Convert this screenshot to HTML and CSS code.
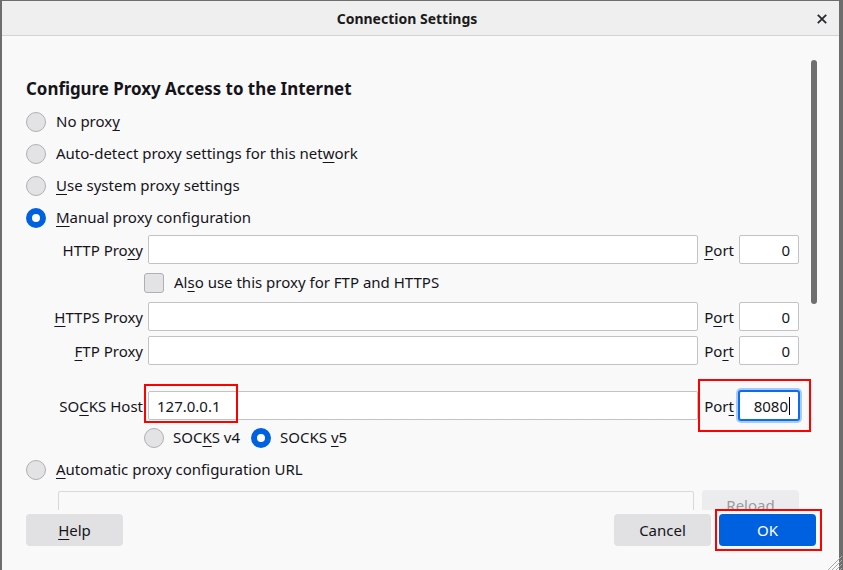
FILE: index.html
```html
<!DOCTYPE html>
<html>
<head>
<meta charset="utf-8">
<title>Connection Settings</title>
<link rel="stylesheet" href="styles.css">
</head>
<body>
<div class="window">
  <div class="titlebar">
    <div class="title">Connection Settings</div>
    <svg class="close" width="10" height="10" viewBox="0 0 10 10"><path d="M0.8 0.8L9.2 9.2M9.2 0.8L0.8 9.2" stroke="#2a2a2e" stroke-width="1.8" fill="none"/></svg>
  </div>
  <div class="content">
    <div class="scroll">
      <h1 class="heading">Configure Proxy Access to the Internet</h1>
      <div class="radio-row first"><span class="radio"></span><span class="rtext">No prox<u>y</u></span></div>
      <div class="radio-row"><span class="radio"></span><span class="rtext">Auto-detect proxy settings for this net<u>w</u>ork</span></div>
      <div class="radio-row"><span class="radio"></span><span class="rtext"><u>U</u>se system proxy settings</span></div>
      <div class="radio-row"><span class="radio checked"></span><span class="rtext"><u>M</u>anual proxy configuration</span></div>

      <div class="prow http">
        <span class="plabel">HTTP Pro<u>x</u>y</span>
        <span class="input"></span>
        <span class="port"><u>P</u>ort</span>
        <span class="input num">0</span>
      </div>
      <div class="check-row"><span class="checkbox"></span><span class="rtext">Al<u>s</u>o use this proxy for FTP and HTTPS</span></div>
      <div class="prow https">
        <span class="plabel"><u>H</u>TTPS Proxy</span>
        <span class="input"></span>
        <span class="port">P<u>o</u>rt</span>
        <span class="input num">0</span>
      </div>
      <div class="prow ftp">
        <span class="plabel"><u>F</u>TP Proxy</span>
        <span class="input"></span>
        <span class="port">Po<u>r</u>t</span>
        <span class="input num">0</span>
      </div>
      <div class="prow socks">
        <span class="plabel">SO<u>C</u>KS Host</span>
        <span class="input">127.0.0.1</span>
        <span class="port">Por<u>t</u></span>
        <span class="input num focus">8080<span class="caret"></span></span>
      </div>
      <div class="socks-type">
        <span class="radio"></span><span class="stext rtext">SOC<u>K</u>S v4</span>
        <span class="radio checked"></span><span class="stext rtext">SOCKS <u>v</u>5</span>
      </div>
      <div class="radio-row"><span class="radio"></span><span class="rtext"><u>A</u>utomatic proxy configuration URL</span></div>
      <div class="url-row">
        <span class="input url"></span>
        <span class="btn reload">R<u>e</u>load</span>
      </div>
    </div>
    <div class="scrollbar"></div>
  </div>
  <div class="footer">
    <span class="btn"><span><u>H</u>elp</span></span>
    <span class="spacer"></span>
    <span class="btn">Cancel</span>
    <span class="btn primary">OK</span>
  </div>
</div>
<div class="mark mark-host"></div>
<div class="mark mark-port"></div>
<div class="mark mark-ok"></div>
<svg class="grip" width="16" height="16" viewBox="0 0 16 16">
  <path d="M16 2L2 16M16 6L6 16M16 10L10 16M16 14L14 16" stroke="#a8a8a8" stroke-width="1" fill="none"/>
</svg>
</body>
</html>
```
FILE: styles.css
```css
* { box-sizing: border-box; }
html, body { margin: 0; padding: 0; }
body {
  width: 843px;
  height: 570px;
  overflow: hidden;
  position: relative;
  font-family: "Noto Sans", "Open Sans", sans-serif;
  font-size: 15px;
  color: #15141a;
  background: #6d6d6d;
}
u { text-decoration: underline; text-decoration-thickness: 1px; text-underline-offset: 3px; }

.window {
  height: 570px;
  border-style: solid;
  border-color: #6d6d6d;
  border-width: 1px 4px 0 2px;
  display: flex;
  flex-direction: column;
  background: #f9f9f9;
}
.titlebar {
  height: 35px;
  flex: none;
  background: #efefef;
  border-bottom: 1px solid #d3d3d3;
  display: flex;
  align-items: center;
  position: relative;
}
.title {
  flex: 1;
  text-align: center;
  font-weight: 700;
  font-size: 14px;
  padding-right: 27px;
  color: #1a1a1a;
}
.close { position: absolute; right: 12px; top: 13px; }

.content {
  flex: 1;
  position: relative;
  overflow: hidden;
}
.scroll { padding: 41px 40px 0 24px; }
.heading {
  margin: 0;
  font-size: 16.9px;
  line-height: 24px;
  font-weight: 700;
}
.radio-row {
  display: flex;
  align-items: center;
  height: 32px;
  gap: 10px;
}
.radio-row.first { margin-top: 5px; }
.rtext { padding-bottom: 2px; }
.radio {
  width: 20px;
  height: 20px;
  flex: none;
  border-radius: 50%;
  border: 1px solid #b0b0b4;
  background: #e3e3e5;
}
.radio.checked { border: 6px solid #0061e0; background: #fff; }

.prow {
  display: grid;
  grid-template-columns: 93px 1fr auto 60px;
  column-gap: 5px;
  align-items: center;
  margin-left: 24px;
  height: 29px;
}
.prow.http { margin-top: 1px; }
.prow.ftp { margin-top: 5px; }
.prow.socks { margin-top: 26px; }
.plabel { text-align: right; white-space: nowrap; }
.port { padding-left: 1px; }
.input {
  height: 29px;
  background: #fff;
  border: 1px solid #c3c3c6;
  border-radius: 2px;
  padding: 0 8px;
  display: flex;
  align-items: center;
}
.input.num { justify-content: flex-end; }
.input.focus {
  border-color: #0a6cf0;
  box-shadow: 0 0 0 1px #0a6cf0, 0 0 0 3px #a8cbf7;
}
.caret { display: inline-block; width: 1px; height: 18px; background: #000; margin-left: 1px; }

.check-row {
  display: flex;
  align-items: center;
  gap: 10px;
  height: 38px;
  margin-left: 118px;
}
.checkbox {
  width: 20px;
  height: 20px;
  flex: none;
  border: 1px solid #b0b0b4;
  background: #e3e3e5;
  border-radius: 3px;
}

.socks-type {
  display: flex;
  align-items: center;
  height: 32px;
  margin-top: 2px;
  margin-left: 118px;
}
.socks-type .stext { margin: 0 11px 0 9px; }

.url-row {
  display: flex;
  gap: 8px;
  margin-top: 5px;
  margin-left: 32px;
}
.input.url { flex: 1; height: 30px; background: transparent; border-color: #d8d8da; }
.btn {
  width: 97px;
  height: 32px;
  flex: none;
  border-radius: 4px;
  background: #e1e1e3;
  display: flex;
  align-items: center;
  justify-content: center;
}
.btn.reload { margin-top: -1px; background: #ececee; color: #9a9a9e; align-items: flex-start; padding-top: 5px; }
.btn.primary { background: #0061e0; color: #fff; }

.footer {
  height: 60px;
  flex: none;
  display: flex;
  gap: 8px;
  padding: 4px 23px 0 24px;
  background: #f9f9f9;
}
.spacer { flex: 1; }

.scrollbar {
  position: absolute;
  right: 22px;
  top: 24px;
  width: 6px;
  height: 244px;
  border-radius: 3px;
  background: #6f6f6f;
}

.mark { position: absolute; border: 2px solid #f00; }
.mark-host { left: 144px; top: 384px; width: 94px; height: 39px; }
.mark-port { left: 698px; top: 379px; width: 113px; height: 53px; }
.mark-ok { left: 715px; top: 509px; width: 107px; height: 42px; }
.grip { position: absolute; left: 826px; top: 554px; }
```
